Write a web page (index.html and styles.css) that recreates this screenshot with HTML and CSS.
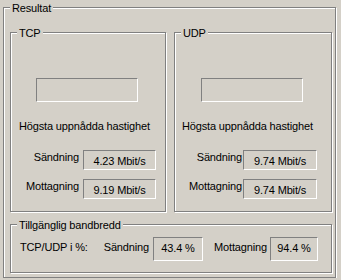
FILE: index.html
```html
<!DOCTYPE html>
<html lang="sv">
<head>
  <meta charset="UTF-8">
  <title>Resultat</title>
  <link rel="stylesheet" href="styles.css">
</head>
<body>
  <div class="group outer">
    <span class="legend">Resultat</span>
    <div class="pair">
      <div class="group proto tcp">
        <span class="legend">TCP</span>
        <div class="status"></div>
        <p class="caption">Högsta uppnådda hastighet</p>
        <div class="row first">
          <span class="label">Sändning</span>
          <span class="value">4.23 Mbit/s</span>
        </div>
        <div class="row">
          <span class="label">Mottagning</span>
          <span class="value">9.19 Mbit/s</span>
        </div>
      </div>
      <div class="group proto udp">
        <span class="legend">UDP</span>
        <div class="status"></div>
        <p class="caption">Högsta uppnådda hastighet</p>
        <div class="row first">
          <span class="label">Sändning</span>
          <span class="value">9.74 Mbit/s</span>
        </div>
        <div class="row">
          <span class="label">Mottagning</span>
          <span class="value">9.74 Mbit/s</span>
        </div>
      </div>
    </div>
    <div class="group band">
      <span class="legend">Tillgänglig bandbredd</span>
      <div class="band-row">
        <span class="band-title">TCP/UDP i %:</span>
        <span class="label send">Sändning</span>
        <span class="value send-val">43.4 %</span>
        <span class="label recv">Mottagning</span>
        <span class="value recv-val">94.4 %</span>
      </div>
    </div>
  </div>
</body>
</html>
```

FILE: styles.css
```css
body {
  margin: 0;
  background-color: #d4d0c8;
  font-family: "Liberation Sans", Arial, sans-serif;
  font-size: 11px;
  line-height: 13px;
  letter-spacing: -0.15px;
  color: #000;
}
.group {
  position: relative;
  box-sizing: border-box;
  border: 1px solid #808080;
  box-shadow: inset 1px 1px 0 #fff, 1px 1px 0 #fff;
}
.legend {
  position: absolute;
  top: -6px;
  left: 6px;
  padding: 0 2px;
  background-color: #d4d0c8;
  white-space: nowrap;
}
.outer {
  width: 333px;
  height: 271px;
  margin: 7px 0 0 3px;
  padding: 24px 0 0 6px;
}
.pair {
  display: flex;
  gap: 8px;
}
.proto {
  height: 180px;
}
.tcp {
  width: 156px;
}
.udp {
  width: 158px;
}
.status {
  box-sizing: border-box;
  width: 102px;
  height: 24px;
  margin-top: 45px;
  border: 1px solid;
  border-color: #808080 #fff #fff #808080;
}
.tcp .status {
  margin-left: 25px;
}
.udp .status {
  margin-left: 26px;
}
.caption {
  margin: 18px 0 0 8px;
}
.udp .caption {
  margin-left: 7px;
}
.row {
  display: flex;
  justify-content: flex-end;
  align-items: flex-start;
  margin-top: 9px;
}
.row.first {
  margin-top: 17px;
}
.tcp .row {
  padding-right: 9px;
}
.udp .row {
  padding-right: 14px;
}
.label {
  margin-top: 1px;
  white-space: nowrap;
}
.tcp .label {
  margin-right: 4px;
}
.udp .label {
  margin-right: 1px;
}
.value {
  box-sizing: border-box;
  height: 20px;
  padding-top: 4px;
  text-align: center;
  white-space: nowrap;
  border: 1px solid;
  border-color: #808080 #fff #fff #808080;
}
.tcp .value {
  width: 73px;
}
.udp .value {
  width: 74px;
}
.band {
  width: 322px;
  height: 49px;
  margin-top: 12px;
}
.band-row {
  display: flex;
  align-items: flex-start;
  margin-top: 12px;
}
.band-title {
  margin: 4px 0 0 9px;
  width: 78px;
  white-space: nowrap;
}
.band .label {
  margin-top: 4px;
  text-align: right;
}
.band .label.send {
  width: 51px;
  margin-right: 4px;
}
.band .label.recv {
  width: 64px;
  margin-right: 3px;
}
.band .value {
  height: 24px;
  padding-top: 4px;
}
.send-val {
  width: 50px;
}
.recv-val {
  width: 48px;
}
```
